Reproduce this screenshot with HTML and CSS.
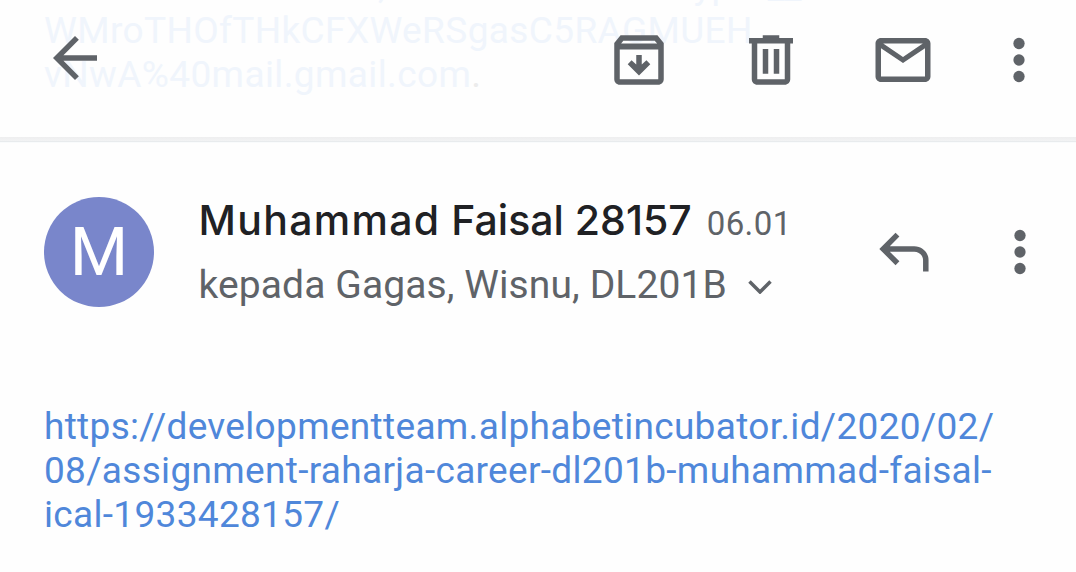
FILE: index.html
```
<!DOCTYPE html>
<html lang="id">
<head>
  <meta charset="UTF-8" />
  <meta name="viewport" content="width=device-width, initial-scale=1.0"/>
  <title>Mail</title>
  <link rel="stylesheet" href="styles.css">
</head>
<body>
  <header class="topbar">
    <!-- message text fading out behind the toolbar -->
    <div class="faded">
      <p class="faded-cut"><span class="comma">,</span><span class="yp">yp</span><span class="under">__</span></p>
      <p>WMroTHOfTHkCFXWeRSgasC5RAGMUEH</p>
      <p>vNwA%40mail.gmail.com<span class="dot">.</span></p>
    </div>
    <nav class="toolbar">
      <button class="icon back" aria-label="Kembali">
        <svg viewBox="0 0 24 24"><path d="M20 11H7.8l5.6-5.6L12 4l-8 8 8 8 1.4-1.4L7.8 13H20z"/></svg>
      </button>
      <button class="icon" aria-label="Arsipkan">
        <svg viewBox="0 0 24 24"><path fill-rule="evenodd" d="M18.7 3H5.3L3 5.8V19c0 1.1.9 2 2 2h14c1.1 0 2-.9 2-2V5.8zM6.3 5h11.4l.9 1H5.5zM5 19V8.2h14V19zM11 10.2h2v3.4l1.7-1.5 1.4 1.4L12 17.6l-4.1-4.1 1.4-1.4 1.7 1.5z"/></svg>
      </button>
      <button class="icon" aria-label="Hapus">
        <svg viewBox="0 0 24 24"><path fill-rule="evenodd" d="M15 4V3H9v1H4v2h1v13c0 1.1.9 2 2 2h10c1.1 0 2-.9 2-2V6h1V4zM17 19H7V6h10zM9 8h2v9H9zM13 8h2v9h-2z"/></svg>
      </button>
      <button class="icon" aria-label="Tandai belum dibaca">
        <svg viewBox="0 0 24 24"><path fill-rule="evenodd" d="M20 4H4c-1.1 0-2 .9-2 2v12c0 1.1.9 2 2 2h16c1.1 0 2-.9 2-2V6c0-1.1-.9-2-2-2zM19.2 6L12 10.9 4.8 6zM4 18V7.7l8 5.4 8-5.4V18z"/></svg>
      </button>
      <button class="icon more" aria-label="Opsi lainnya">
        <svg viewBox="0 0 24 24"><circle cx="12" cy="6" r="2.05"/><circle cx="12" cy="12" r="2.05"/><circle cx="12" cy="18" r="2.05"/></svg>
      </button>
    </nav>
  </header>

  <main class="message">
    <div class="sender">
      <div class="avatar">M</div>
      <div class="info">
        <div class="line"><h1 class="name"><span class="first">Muhammad</span> Faisal 28157</h1><span class="date">06.01</span></div>
        <div class="line to">
          <span class="recipients">kepada Gagas, Wisnu, DL201B</span>
          <svg class="chevron" viewBox="0 0 24 14"><path d="M1.5 1.5L12 12 22.5 1.5"/></svg>
        </div>
      </div>
      <button class="icon reply" aria-label="Balas">
        <svg viewBox="0 0 24 24"><path d="M9.6 5.3L8.2 3.9 2.3 9.8l5.9 5.9 1.4-1.4-3.5-3.5H15c1.7 0 3.2 1.3 3.2 3V18h2v-4.2c0-2.8-2.4-5-5.2-5H6.1z"/></svg>
      </button>
      <button class="icon" aria-label="Opsi pesan">
        <svg viewBox="0 0 24 24"><circle cx="12" cy="6" r="2.05"/><circle cx="12" cy="12" r="2.05"/><circle cx="12" cy="18" r="2.05"/></svg>
      </button>
    </div>
    <a class="link" href="#">https://developmentteam.alphabetincubator.id/2020/02/<br>08/assignment-raharja-career-dl201b-muhammad-faisal-<br>ical-1933428157/</a>
  </main>
</body>
</html>
```
FILE: styles.css
```
* {
  box-sizing: border-box;
}
body {
  margin: 0;
  height: 572px;
  overflow: hidden;
  background: #fefefe;
  font-family: Roboto, sans-serif;
  color: #5f6368;
}
p, h1 {
  margin: 0;
}
.topbar {
  position: relative;
  height: 143px;
  background: linear-gradient(#eeeeef, #f2f3f4 4px, #e8ebed 4px, #e8ebed 5px, #f9fbfc 5px) 0 137px / 100% 6px no-repeat;
}
.faded {
  position: absolute;
  top: -35px;
  left: 44px;
  width: 900px;
  height: 150px;
  font-size: 37px;
  letter-spacing: 0.38px;
  line-height: 44px;
  color: #f0f5fc;
  white-space: nowrap;
}
.faded-cut {
  display: flex;
  margin-top: -1px;
  margin-bottom: 1px;
}
.comma {
  margin-left: 334px;
}
.yp {
  margin-left: 308px;
}
.under {
  margin-left: 35px;
}
.dot {
  color: #ececec;
}
.toolbar {
  position: relative;
  display: flex;
  align-items: center;
  height: 120px;
  padding-left: 42px;
  gap: 66px;
}
.icon {
  flex: none;
  width: 66px;
  height: 66px;
  padding: 0;
  border: none;
  background: none;
}
.icon svg {
  display: block;
  width: 66px;
  height: 66px;
  fill: #5f6368;
}
.back {
  margin: -4px 432px 0 0;
}
.more {
  margin-left: -16px;
}
.message {
  padding: 54px 23px 0 44px;
}
.sender {
  display: flex;
  height: 110px;
}
.avatar {
  flex: none;
  width: 110px;
  height: 110px;
  border-radius: 50%;
  background: #7986cb;
  color: #fff;
  font-size: 67px;
  line-height: 110px;
  text-align: center;
}
.info {
  flex: none;
  width: 719px;
  padding-left: 44.5px;
  margin-top: -1px;
}
.line {
  display: flex;
  align-items: baseline;
  height: 64px;
  line-height: 48px;
  white-space: nowrap;
}
.name {
  font-family: Inter, sans-serif;
  font-size: 41px;
  font-weight: 500;
  color: #202124;
}
.first {
  letter-spacing: 1.3px;
}
.date {
  margin-left: 15px;
  font-size: 33px;
  letter-spacing: 0.4px;
}
.to {
  align-items: flex-start;
  font-size: 39px;
  letter-spacing: 0.1px;
}
.recipients {
  padding-top: 1px;
}
.chevron {
  width: 24px;
  height: 14px;
  margin: 20px 0 0 21px;
  fill: none;
  stroke: #5f6368;
  stroke-width: 3.5;
}
.sender .icon {
  margin-top: 22px;
}
.sender .reply {
  margin-top: 25px;
  margin-right: 48px;
}
.link {
  display: block;
  margin-top: 98px;
  font-size: 37px;
  letter-spacing: 0.32px;
  line-height: 44px;
  color: #4f87da;
  text-decoration: none;
  white-space: nowrap;
}
```
